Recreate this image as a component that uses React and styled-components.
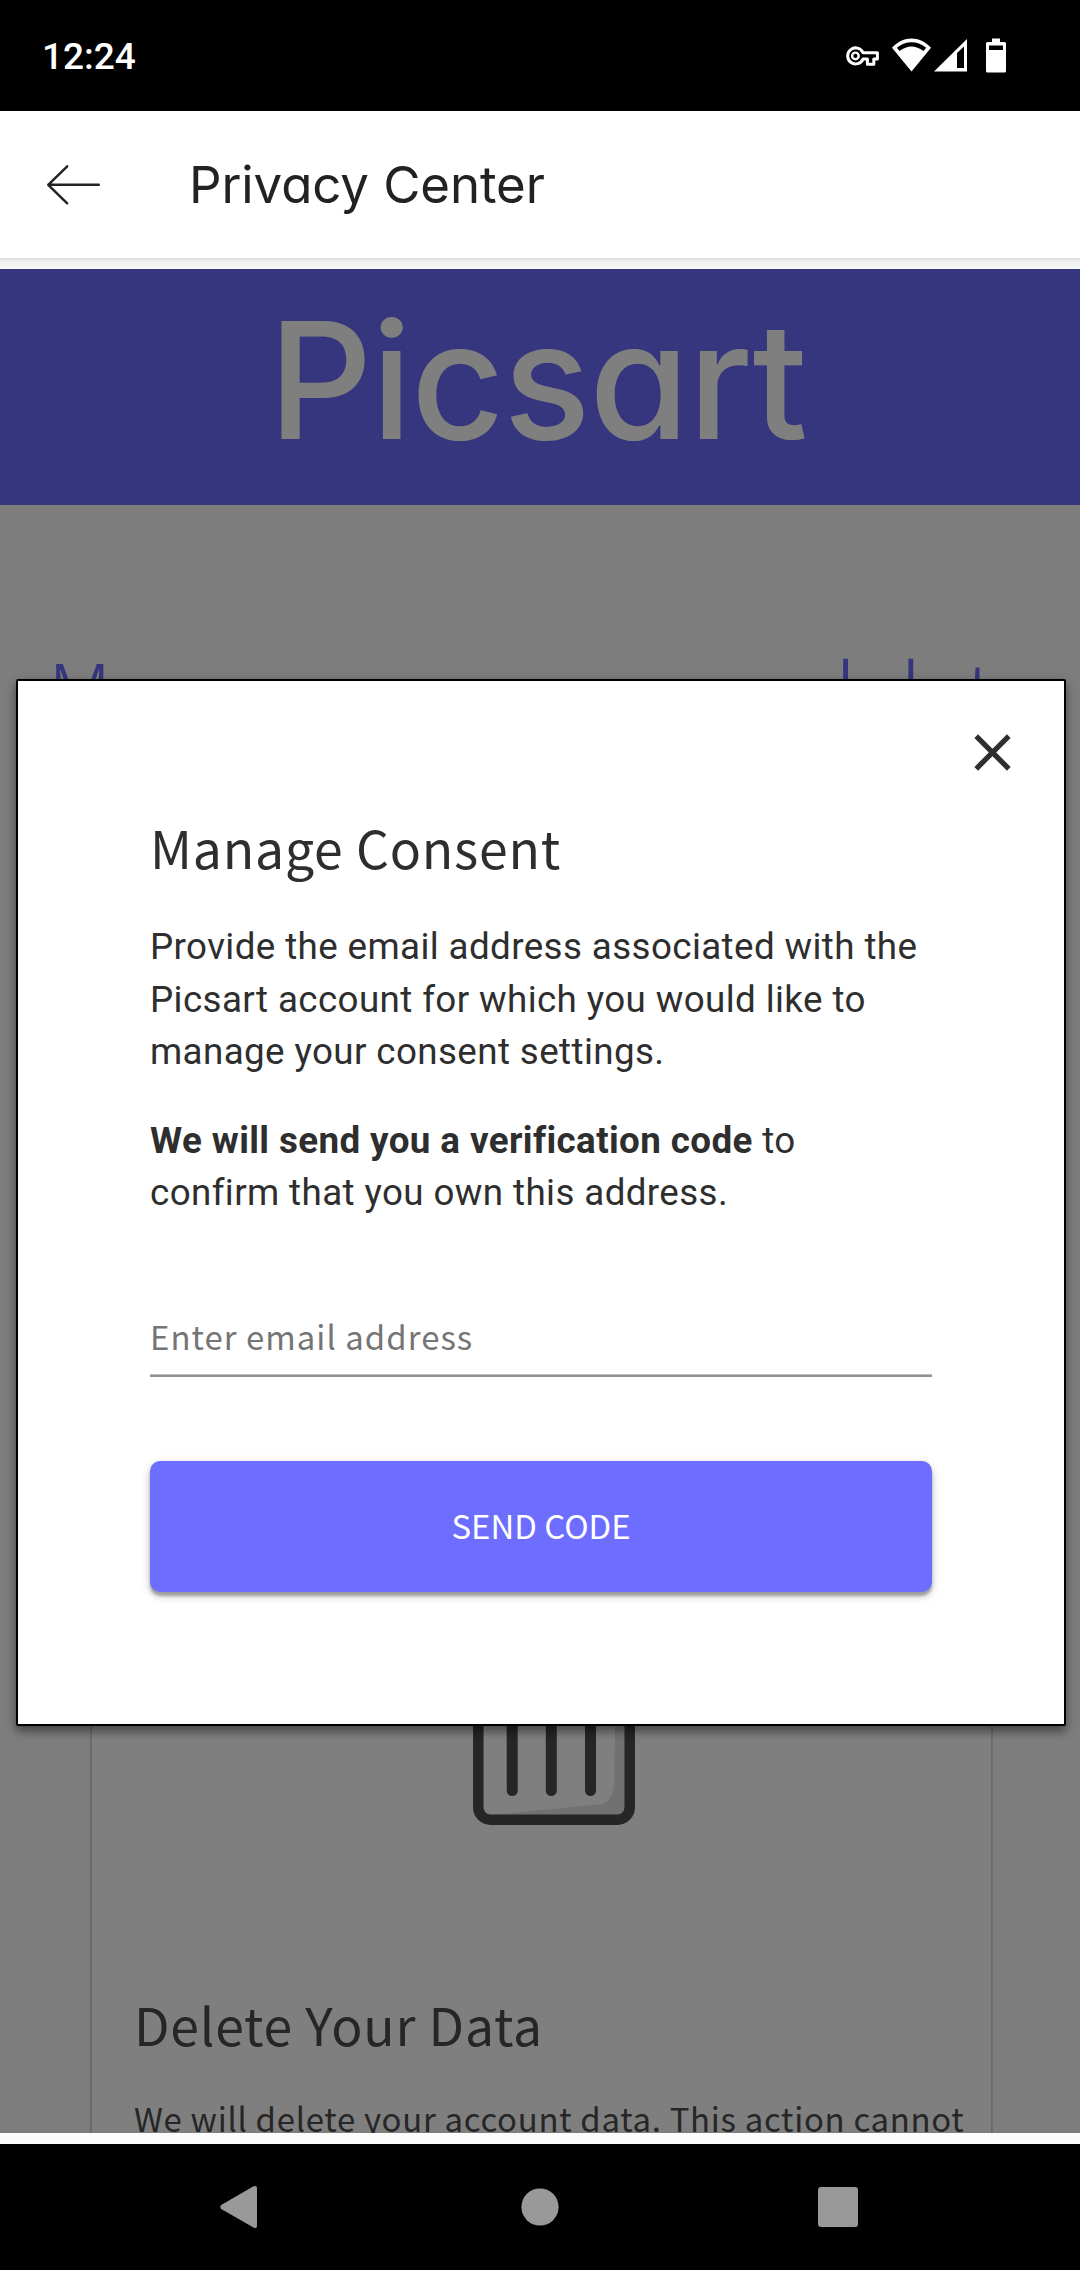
import React from 'react';
import styled, { createGlobalStyle } from 'styled-components';

const source = '"Noto Sans CJK SC", "Open Sans", sans-serif';
const roboto = 'Roboto, "Liberation Sans", sans-serif';
const rounded = 'Inter, Lato, sans-serif';

const GlobalStyle = createGlobalStyle`
  * { box-sizing: border-box; }
  body { margin: 0; background: #000; }
  h1, h2, p { margin: 0; font-weight: 400; }
  svg { display: block; flex: none; }
  button { padding: 0; border: 0; background: none; }
`;

const Screen = styled.div`
  width: 1080px;
  height: 2270px;
  display: flex;
  flex-direction: column;
  overflow: hidden;
  background: #fcfcfc;
`;

const StatusBar = styled.div`
  height: 111px;
  flex: none;
  display: flex;
  align-items: center;
  justify-content: space-between;
  padding: 0 74px 0 42px;
  background: #000;
`;

const Clock = styled.span`
  padding-top: 2px;
  font: 500 37px/44px ${roboto};
  color: #fff;
`;

const AppBar = styled.header`
  height: 147px;
  flex: none;
  display: flex;
  align-items: center;
  padding-left: 46px;
  background: #fff;
`;

const IconButton = styled.button`
  display: flex;
`;

const AppTitle = styled.h1`
  margin-left: 87px;
  font: 400 51px/60px ${rounded};
  font-feature-settings: "cv11";
  letter-spacing: -0.1px;
  color: #222;
`;

const AppBarShadow = styled.div`
  height: 11px;
  flex: none;
  background: linear-gradient(#dcdcdc, #eee 30%, #fafafa);
`;

const WebView = styled.main`
  position: relative;
  height: 1864px;
  flex: none;
  overflow: hidden;
  background: #fafafa;
`;

const Banner = styled.div`
  height: 236px;
  display: flex;
  justify-content: center;
  padding: 29px 5px 0 0;
  background: #6c6cfc;
`;

const Wordmark = styled.span`
  font: 500 162px/165px ${rounded};
  font-feature-settings: "cv11";
  letter-spacing: -1.2px;
  color: #fff;
`;

const PageHeading = styled.h1`
  padding: 124px 0 0 47.5px;
  font: 300 82px/120px ${source};
  letter-spacing: 0.1px;
  word-spacing: 17.2px;
  white-space: nowrap;
  color: #6c6cfc;
`;

const Card = styled.section`
  width: 903px;
  height: 1000px;
  margin: 590px 0 0 90px;
  padding: 274px 0 0 42px;
  border: 2px solid #d8d8d8;
  border-radius: 10px;
  background: #fff;
`;

const CardIcon = styled.div`
  padding-left: 339px;
`;

const CardTitle = styled.h2`
  margin-top: 157px;
  font: 400 51.7px/84px ${source};
  letter-spacing: 0.78px;
  color: #4d4d4d;
`;

const CardText = styled.p`
  margin-top: 26px;
  font: 400 32.9px/52px ${source};
  letter-spacing: 0.71px;
  white-space: nowrap;
  color: #4d4d4d;
`;

const Overlay = styled.div`
  position: absolute;
  inset: 0;
  display: flex;
  justify-content: center;
  align-items: center;
  padding: 3px 0 0 2px;
  background: rgba(0, 0, 0, 0.5);
`;

const Dialog = styled.div`
  width: 1050px;
  height: 1047px;
  display: flex;
  flex-direction: column;
  padding: 0 132px;
  border: 2px solid #000;
  border-radius: 2px;
  background: #fff;
  color: #2e2e2e;
  box-shadow: 0 6px 8px rgba(0, 0, 0, 0.35), 0 2px 12px rgba(0, 0, 0, 0.15);
`;

const CloseRow = styled.div`
  display: flex;
  justify-content: flex-end;
  margin: 53px -79px 0 0;
`;

const DialogTitle = styled.h2`
  margin: 34px 0 32px;
  font: 400 51.7px/84px ${source};
  letter-spacing: 0.8px;
`;

const DialogText = styled.p`
  margin-bottom: 36px;
  font: 400 36.75px/52.6px ${roboto};
  letter-spacing: 0.39px;
  white-space: nowrap;

  b { font-weight: 700; }
`;

const EmailInput = styled.input`
  width: 100%;
  height: 65px;
  margin-top: 56px;
  padding: 0 0 16px;
  border: 0;
  border-bottom: 2px solid #919191;
  border-radius: 0;
  background: none;
  box-shadow: inset 0 -1px #bdbdbd;
  font: 400 32.9px/48px ${source};
  letter-spacing: 1.05px;

  &::placeholder { color: #757575; opacity: 1; }
`;

const SendButton = styled.button`
  height: 131px;
  margin-top: 84px;
  padding-bottom: 3px;
  border-radius: 10px;
  background: #6d6dff;
  font: 400 32.9px/48px ${source};
  color: #fff;
  box-shadow: 0 4px 3px rgba(0, 0, 0, 0.28), 0 5px 10px rgba(0, 0, 0, 0.14), 0 1px 12px rgba(0, 0, 0, 0.08);
`;

const NavBar = styled.nav`
  height: 126px;
  flex: none;
  margin-top: 11px;
  display: flex;
  align-items: center;
  justify-content: space-between;
  padding: 0 222px 0 220px;
  background: #000;
`;

const HomeSlot = styled.span`
  padding-left: 4px;
`;

const StatusIcons = () => (
  <svg width="161" height="36" viewBox="845 37.5 161 36" fill="#fff">
    <path fill="none" stroke="#fff" strokeWidth="3" strokeLinejoin="round" d="M863 52.2H877.4V58.6H873.8V63.8H867.4V58.6H863A8 8 0 1 1 863 52.2Z" />
    <circle cx="855.4" cy="55.4" r="3.3" fill="none" stroke="#fff" strokeWidth="2.4" />
    <path fillRule="evenodd" d="M892 47.3C903.5 35 919.5 35 931 47.3L911.5 71ZM896.8 47.2L899.6 50.6Q911.5 41.5 923.4 50.6L926.2 47.2Q911.5 36.4 896.8 47.2Z" />
    <path fillRule="evenodd" d="M934 71L967 38.5V71ZM957 52.6V67.6H964V46Z" />
    <path fillRule="evenodd" d="M992 38h8v3.5h4.5a1.5 1.5 0 0 1 1.5 1.5v27.5a1.5 1.5 0 0 1-1.5 1.5h-17a1.5 1.5 0 0 1-1.5-1.5V43a1.5 1.5 0 0 1 1.5-1.5h4.5ZM989 45v4.5h14V45Z" />
  </svg>
);

const BackArrow = () => (
  <svg width="56" height="42" viewBox="46 163.5 56 42" fill="none" stroke="#222" strokeWidth="2.4" strokeLinecap="round" strokeLinejoin="round">
    <path d="M98.8 184.3H48.2M67.2 165.8L48.2 184.3L67.2 202.8" />
  </svg>
);

const CloseIcon = () => (
  <svg width="37" height="37" viewBox="0 0 37 37" stroke="#2e2e2e" strokeWidth="5.2">
    <path d="M2.2 2.2L34.8 34.8M34.8 2.2L2.2 34.8" />
  </svg>
);

const TrashIcon = () => (
  <svg width="162" height="210" viewBox="0 0 162 210" fill="none" stroke="#4d4d4d">
    <path fill="#e3e3e3" stroke="none" d="M144 0L141 172Q138 186 130 189L18 200H157V0Z" />
    <path strokeWidth="10.5" d="M5.3 20V192.5A12.2 12.2 0 0 0 17.5 204.7H144.5A12.2 12.2 0 0 0 156.7 192.5V20Z" />
    <path strokeWidth="11" strokeLinecap="round" d="M39.2 60V175.5M78.3 60V175.5M117.5 60V175.5" />
  </svg>
);

const NavBack = () => (
  <svg width="38" height="44" viewBox="0 0 38 44" fill="#999">
    <path d="M1.2 20L33.5 1.3Q37 0 37 3V41Q37 44 33.5 42.5L1.2 24Q-0.6 22 1.2 20Z" />
  </svg>
);

const NavHome = () => (
  <svg width="38" height="38" viewBox="0 0 38 38">
    <circle cx="19" cy="19" r="18.6" fill="#999" />
  </svg>
);

const NavRecents = () => (
  <svg width="40" height="40" viewBox="0 0 40 40">
    <rect width="40" height="40" rx="3" fill="#999" />
  </svg>
);

export default function App() {
  return (
    <Screen>
      <GlobalStyle />
      <StatusBar>
        <Clock>12:24</Clock>
        <StatusIcons />
      </StatusBar>
      <AppBar>
        <IconButton aria-label="Back"><BackArrow /></IconButton>
        <AppTitle>Privacy Center</AppTitle>
      </AppBar>
      <AppBarShadow />
      <WebView>
        <Banner><Wordmark>Picsart</Wordmark></Banner>
        <PageHeading>Manage, access, or delete</PageHeading>
        <Card>
          <CardIcon><TrashIcon /></CardIcon>
          <CardTitle>Delete Your Data</CardTitle>
          <CardText>We will delete your account data. This action cannot</CardText>
        </Card>
        <Overlay>
          <Dialog role="dialog">
            <CloseRow>
              <IconButton aria-label="Close"><CloseIcon /></IconButton>
            </CloseRow>
            <DialogTitle>Manage Consent</DialogTitle>
            <DialogText>
              Provide the email address associated with the<br />
              Picsart account for which you would like to<br />
              manage your consent settings.
            </DialogText>
            <DialogText>
              <b>We will send you a verification code</b> to<br />
              confirm that you own this address.
            </DialogText>
            <EmailInput placeholder="Enter email address" />
            <SendButton>SEND CODE</SendButton>
          </Dialog>
        </Overlay>
      </WebView>
      <NavBar>
        <NavBack />
        <HomeSlot><NavHome /></HomeSlot>
        <NavRecents />
      </NavBar>
    </Screen>
  );
}
